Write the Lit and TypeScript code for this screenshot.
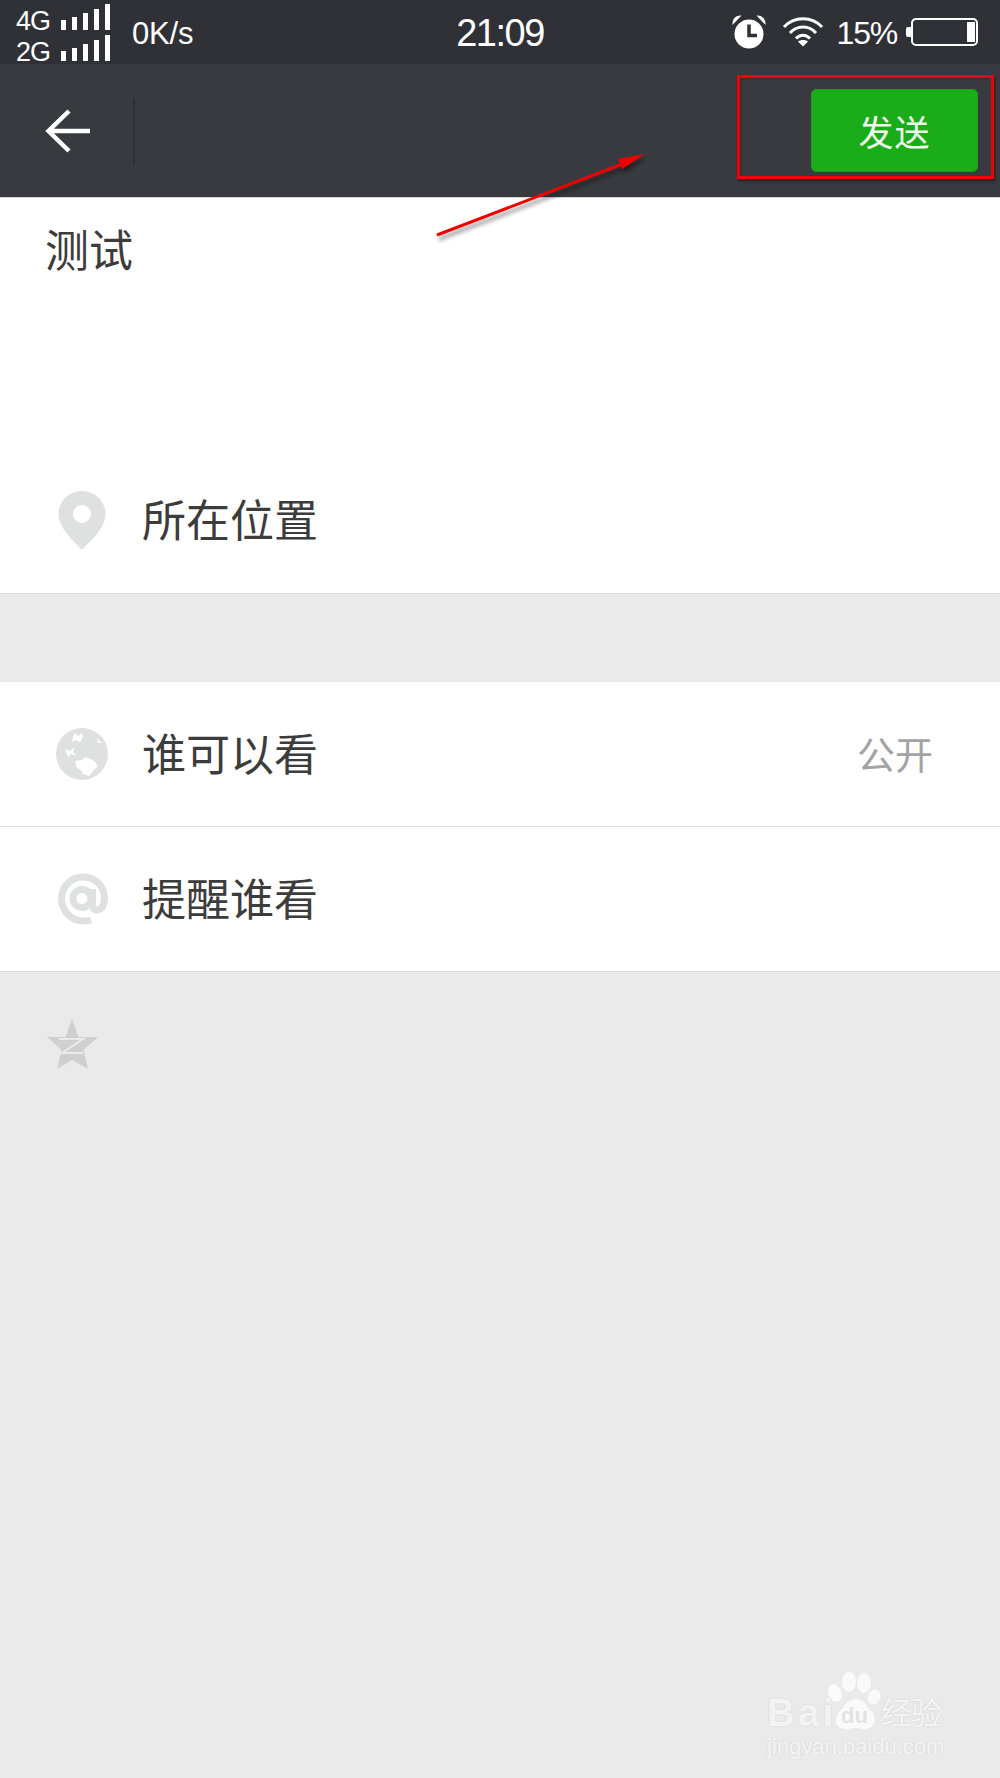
import { LitElement, html, css, svg } from 'lit';
import { customElement } from 'lit/decorators.js';

const SANS = css`"Liberation Sans", "Noto Sans CJK SC", sans-serif`;

@customElement('app-root')
export class AppRoot extends LitElement {
  static override styles = css`
    :host {
      display: block;
      position: relative;
      width: 1000px;
      height: 1778px;
      overflow: hidden;
      background: #eaeaea;
      font-family: ${SANS};
      color: #3c3c3c;
    }

    /* status bar */
    .status {
      height: 64px;
      background: #303136;
      color: #fff;
      display: grid;
      grid-template-columns: 1fr auto 1fr;
      align-items: center;
    }
    .status-left {
      align-self: stretch;
      display: flex;
      align-items: flex-start;
      padding-left: 16px;
    }
    .sims {
      margin-top: 4px;
      display: grid;
      grid-template-columns: 34px auto;
      column-gap: 11px;
      row-gap: 5px;
      font-size: 27px;
      letter-spacing: -1px;
    }
    .sims span {
      height: 26px;
      line-height: 34px;
    }
    .bars {
      display: block;
      width: 49px;
      height: 26px;
    }
    .speed {
      align-self: center;
      font-size: 31px;
      margin-left: 22px;
      padding-top: 3px;
      letter-spacing: -0.2px;
    }
    .time {
      font-size: 38px;
      letter-spacing: -1.5px;
      padding-top: 3px;
    }
    .status-right {
      display: flex;
      align-items: center;
      justify-content: flex-end;
      padding-right: 22px;
    }
    .pct {
      font-size: 32px;
      letter-spacing: -1.2px;
      margin: 0 9px 0 13px;
      padding-top: 3px;
    }
    .clock { width: 34px; height: 34px; margin-right: 16px; }
    .wifi { width: 42px; height: 30px; overflow: visible; }
    .battery { width: 72px; height: 28px; }

    /* toolbar */
    .toolbar {
      height: 133px;
      background: #393a3f;
      display: flex;
      align-items: center;
      box-sizing: border-box;
      padding: 0 22px 0 44px;
    }
    .back { width: 48px; height: 48px; }
    .divider {
      width: 2px;
      height: 66px;
      margin-left: 41px;
      background: #2e2f33;
    }
    .send {
      margin-left: auto;
      width: 167px;
      height: 83px;
      border-radius: 6px;
      background: #1aad19;
      box-shadow: inset 0 0 0 1px #1c9f1b;
      color: #f0f8ee;
      font-size: 35px;
      display: flex;
      align-items: center;
      justify-content: center;
      letter-spacing: 1px;
    }

    /* sections */
    .compose {
      background: #fff;
      border-top: 1px solid #d8d8d8;
      border-bottom: 1px solid #dcdcdc;
      height: 395px;
      display: flex;
      flex-direction: column;
    }
    .draft {
      padding: 24px 0 0 45px;
      font-size: 44px;
      line-height: 60px;
      height: 262px;
      box-sizing: border-box;
    }
    .group {
      margin-top: 88px;
      background: #fff;
    }
    .row {
      display: flex;
      align-items: center;
      height: 144px;
      border-bottom: 1px solid #dcdcdc;
      font-size: 44px;
      padding: 0 67px 0 56px;
    }
    .compose .row { border-bottom: none; height: 120px; }
    .row-icon { width: 54px; height: 60px; flex: none; margin-right: 32px; }
    .label { margin-bottom: 4px; }
    .row-value { margin-left: auto; margin-bottom: 4px; font-size: 38px; color: #a3a3a3; }

    .qzone { display: block; width: 54px; height: 54px; margin: 46px 0 0 45px; }

    /* baidu watermark */
    .mark {
      position: absolute;
      left: 766px;
      top: 1668px;
      width: 184px;
      height: 96px;
      color: rgba(255, 255, 255, 0.75);
      text-shadow: 0 0 2px rgba(0, 0, 0, 0.12);
    }
    .mark-bai {
      position: absolute;
      left: 1px;
      top: 26px;
      font-size: 38px;
      line-height: 38px;
      font-weight: 700;
      letter-spacing: 3.500px;
    }
    .mark-paw { position: absolute; left: 62px; top: 4px; width: 54px; height: 57px; }
    .mark-du {
      position: absolute;
      left: 75px;
      top: 36px;
      font-size: 22px;
      line-height: 24px;
      font-weight: 700;
      color: #e3e3e3;
      text-shadow: none;
    }
    .mark-cn {
      position: absolute;
      left: 115px;
      top: 28px;
      font-size: 31px;
      line-height: 36px;
      letter-spacing: -1px;
      white-space: nowrap;
    }
    .mark-url {
      position: absolute;
      left: 1px;
      top: 68px;
      font-size: 22px;
      line-height: 22px;
      white-space: nowrap;
    }

    /* screenshot annotation */
    .note-box {
      position: absolute;
      left: 737px;
      top: 75px;
      width: 251px;
      height: 98px;
      border: 3px solid #f00000;
      box-shadow: 1px 2px 3px rgba(0, 0, 0, 0.45), inset 1px 1px 2px rgba(0, 0, 0, 0.25);
    }
    .note-arrow {
      position: absolute;
      left: 0;
      top: 0;
      width: 1000px;
      height: 300px;
      pointer-events: none;
    }
  `;

  private bars() {
    const heights = [10, 13, 17, 21, 26];
    return html`<svg class="bars" viewBox="0 0 49 26">
      ${heights.map((h, i) => svg`<rect x=${i * 11} y=${26 - h} width="5" height=${h} fill="#fff"></rect>`)}
    </svg>`;
  }

  override render() {
    return html`
      <div class="status">
        <div class="status-left">
          <div class="sims">
            <span>4G</span>${this.bars()}
            <span>2G</span>${this.bars()}
          </div>
          <span class="speed">0K/s</span>
        </div>
        <span class="time">21:09</span>
        <div class="status-right">
          <svg class="clock" viewBox="0 0 34 34">
            <circle cx="17" cy="19" r="14.500" fill="#fff"></circle>
            <path d="M0.500 10 C0 4 4 0 9.500 0.500 Z M33.500 10 C34 4 30 0 24.500 0.500 Z" fill="#fff"></path>
            <path d="M17 9.500 V20.500 H25" fill="none" stroke="#303136" stroke-width="3.500"></path>
          </svg>
          <svg class="wifi" viewBox="0 0 42 30">
            <g fill="none" stroke="#fff" stroke-width="3">
              <path d="M2 10 C12 -1 30 -1 40 10"></path>
              <path d="M8 16 C15 8 27 8 34 16"></path>
              <path d="M14 21.500 C18 17 24 17 28 21.500"></path>
            </g>
            <path d="M16 24.5 L21 29.5 L26 24.5 C23 22.5 19 22.5 16 24.5 Z" fill="#fff"></path>
          </svg>
          <span class="pct">15%</span>
          <svg class="battery" viewBox="0 0 72 28">
            <path d="M0 11 Q0 9 2 9 H5 V19 H2 Q0 19 0 17 Z" fill="#fff"></path>
            <rect x="6" y="1" width="65" height="26" rx="4" fill="none" stroke="#fff" stroke-width="2"></rect>
            <rect x="61" y="4" width="8" height="20" fill="#fff"></rect>
          </svg>
        </div>
      </div>

      <div class="toolbar">
        <svg class="back" viewBox="0 0 48 48">
          <path d="M46 24 H6 M25 4 L4.5 24 L25 44" fill="none" stroke="#fff" stroke-width="4.500"></path>
        </svg>
        <div class="divider"></div>
        <div class="send">发送</div>
      </div>

      <div class="compose">
        <div class="draft">测试</div>
        <div class="row">
          <svg class="row-icon" viewBox="1 0 54 60">
            <path fill-rule="evenodd" fill="#dfe1e0" d="M27 1 C14 1 3.500 11 3.500 24 C3.500 37 17 50 27 59.500 C37 50 50.500 37 50.500 24 C50.500 11 40 1 27 1 Z M27 15 A9 9 0 1 1 27 33 A9 9 0 1 1 27 15 Z"></path>
          </svg>
          <span class="label">所在位置</span>
        </div>
      </div>

      <div class="group">
        <div class="row">
          <svg class="row-icon" viewBox="0 0 54 60">
            <circle cx="26" cy="30" r="26" fill="#dfe1e0"></circle>
            <path fill="#fff" d="M19 9 L22 12 L26 9 L27 13 L24 18 L20 16 L16 18 L17 13 Z"></path>
            <path fill="#fff" d="M9 25 L14 27 L19 23 L17 27 L20 32 L15 30 L12 33 Z"></path>
            <path fill="#fff" d="M19 37 L26 36 L29 33 L35 35 L39 38 L42 42 L38 46 L33 52 L27 50 L25 46 L21 44 Z"></path>
            <path fill="#fff" d="M41 14 L46 19 L42 19 Z"></path>
          </svg>
          <span class="label">谁可以看</span>
          <span class="row-value">公开</span>
        </div>
        <div class="row">
          <svg class="row-icon" viewBox="0 0 54 60">
            <path fill="none" stroke="#dfe1e0" stroke-width="7" d="M35 51 C32 52 29.500 52 27 52 C15 52 5.500 41.500 5.500 29.500 C5.500 18 15 8 27 8 C39 8 48.500 17 48.500 29 C48.500 37 45 41 41 41 C38 41 36.500 39 36.500 36 V20"></path>
            <circle cx="26" cy="29.500" r="9" fill="none" stroke="#dfe1e0" stroke-width="7"></circle>
          </svg>
          <span class="label">提醒谁看</span>
        </div>
      </div>

      <svg class="qzone" viewBox="0 0 54 54">
        <path fill="#cfcfcf" d="M27 1 L33.500 19 L53 19 L38.500 32 L43 51 L27 42 L12 51 L16.500 32 L2 19 L20.500 19 Z"></path>
        <path fill="none" stroke="#eaeaea" stroke-width="2" d="M14 21 H38 L17 35 H38"></path>
      </svg>

      <div class="mark">
        <span class="mark-bai">Bai</span>
        <svg class="mark-paw" viewBox="0 0 54 57">
          <g fill="currentColor">
            <ellipse cx="7" cy="21" rx="6.500" ry="9" transform="rotate(-20 7 21)"></ellipse>
            <ellipse cx="21" cy="10" rx="7" ry="10"></ellipse>
            <ellipse cx="36" cy="11" rx="7" ry="10"></ellipse>
            <ellipse cx="46" cy="25" rx="6" ry="8" transform="rotate(20 46 25)"></ellipse>
            <path d="M28 27 C36 27 38 34 44 40 C50 48 46 57 36 57 C32 57 30 56 28 56 C25 56 23 57 18 57 C8 57 5 48 11 40 C17 34 20 27 28 27 Z"></path>
          </g>
        </svg>
        <span class="mark-du">du</span>
        <span class="mark-cn">经验</span>
        <span class="mark-url">jingyan.baidu.com</span>
      </div>

      <div class="note-box"></div>
      <svg class="note-arrow" viewBox="0 0 1000 300">
        <defs>
          <filter id="drop" x="-10%" y="-50%" width="120%" height="200%">
            <feDropShadow dx="2" dy="4" stdDeviation="2" flood-color="#000" flood-opacity="0.45"></feDropShadow>
          </filter>
        </defs>
        <g filter="url(#drop)">
          <path d="M437 235 L625 163" fill="none" stroke="#ee0000" stroke-width="3"></path>
          <path d="M645 154 L618 159 L622 169 Z" fill="#ee0000"></path>
        </g>
      </svg>
    `;
  }
}

declare global {
  interface HTMLElementTagNameMap {
    'app-root': AppRoot;
  }
}
